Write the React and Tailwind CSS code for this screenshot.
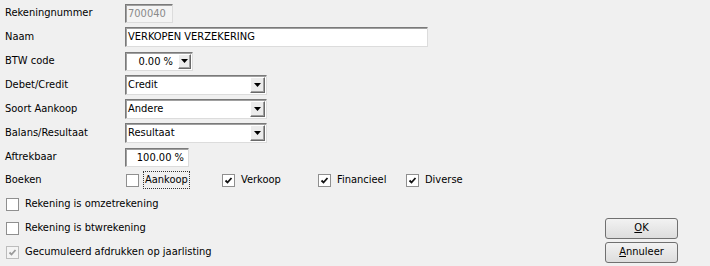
const sunken =
  "border border-t-[#7a7a7a] border-l-[#7a7a7a] border-r-[#dcdcdc] border-b-[#dcdcdc] shadow-[inset_1px_1px_0_#a0a0a0]";

function Arrow() {
  return (
    <svg width="7" height="4" viewBox="0 0 7 4">
      <path d="M0 0h7L3.5 4z" fill="#000" />
    </svg>
  );
}

function DropButton({ w = "w-[14px]" }) {
  return (
    <div
      className={`${w} my-[1px] mr-[1px] flex items-center justify-center border border-t-white border-l-white border-r-[#696969] border-b-[#696969] bg-[#ececec] shadow-[inset_-1px_-1px_0_#a0a0a0]`}
    >
      <Arrow />
    </div>
  );
}

function Row({ label, children, h = "h-[24px]" }) {
  return (
    <div className={`flex ${h} items-center`}>
      <span className="w-[125px] shrink-0 pl-[5px]">{label}</span>
      {children}
    </div>
  );
}

function Select({ value, w }) {
  return (
    <div className={`flex h-[20px] ${w} bg-white ${sunken}`}>
      <span className="flex-1 pl-[2px] leading-[18px]">{value}</span>
      <DropButton w="w-[15px]" />
    </div>
  );
}

function Check({ checked, disabled }) {
  return (
    <span
      className={`flex h-[13px] w-[13px] shrink-0 items-center justify-center border ${
        disabled ? "border-[#bcbcbc] bg-[#f4f4f4]" : "border-[#8f8f8f] bg-white"
      }`}
    >
      {checked && (
        <svg width="9" height="9" viewBox="0 0 9 9">
          <path
            d="M1.5 4.5 3.5 6.5 7.5 2"
            fill="none"
            stroke={disabled ? "#9a9a9a" : "#111"}
            strokeWidth="1.8"
          />
        </svg>
      )}
    </span>
  );
}

function CheckItem({ label, checked, disabled, focus, w }) {
  return (
    <div className={`flex items-center ${w}`}>
      <Check checked={checked} disabled={disabled} />
      <span
        className={`ml-[4px] px-[1px] ${
          focus ? "border border-dotted border-[#333]" : "border border-transparent"
        }`}
      >
        {label}
      </span>
    </div>
  );
}

function Button({ children }) {
  return (
    <button
      type="button"
      className="h-[21px] w-[73px] rounded-[3px] border border-[#707070] bg-gradient-to-b from-[#f2f2f2] to-[#dddddd] text-[11px] text-black"
    >
      {children}
    </button>
  );
}

export default function App() {
  return (
    <div
      className="relative h-[266px] w-[710px] overflow-hidden bg-[#f0f0f0] text-[11px] text-black"
      style={{ fontFamily: "'DejaVu Sans Condensed', 'Liberation Sans', sans-serif" }}
    >
      <div className="pt-[1px]">
        <Row label="Rekeningnummer">
          <div className={`h-[19px] w-[48px] bg-[#f4f4f4] ${sunken} pl-[2px] leading-[17px] text-[#8a8a8a]`}>
            700040
          </div>
        </Row>

        <Row label="Naam">
          <div className={`h-[20px] w-[303px] bg-white ${sunken} pl-[2px] leading-[18px]`}>
            VERKOPEN VERZEKERING
          </div>
        </Row>

        <Row label="BTW code">
          <div className={`flex h-[19px] w-[68px] bg-white ${sunken}`}>
            <span className="flex-1 pr-[5px] text-right leading-[17px]">0.00 %</span>
            <DropButton w="w-[13px]" />
          </div>
        </Row>

        <Row label="Debet/Credit">
          <Select value="Credit" w="w-[142px]" />
        </Row>

        <Row label="Soort Aankoop">
          <Select value="Andere" w="w-[142px]" />
        </Row>

        <Row label="Balans/Resultaat">
          <Select value="Resultaat" w="w-[142px]" />
        </Row>

        <Row label="Aftrekbaar">
          <div className={`h-[19px] w-[64px] bg-white ${sunken} pr-[4px] text-right leading-[17px]`}>
            100.00 %
          </div>
        </Row>

        <Row label="Boeken" h="h-[22px]">
          <div className="flex pl-[1px]">
            <CheckItem label="Aankoop" focus w="w-[96px]" />
            <CheckItem label="Verkoop" checked w="w-[96px]" />
            <CheckItem label="Financieel" checked w="w-[88px]" />
            <CheckItem label="Diverse" checked />
          </div>
        </Row>
      </div>

      <div className="mt-[1px] flex justify-between pr-[32px]">
        <div className="pl-[6px]">
          <div className="flex h-[24px] items-center">
            <CheckItem label="Rekening is omzetrekening" />
          </div>
          <div className="flex h-[24px] items-center">
            <CheckItem label="Rekening is btwrekening" />
          </div>
          <div className="flex h-[24px] items-center">
            <CheckItem label="Gecumuleerd afdrukken op jaarlisting" checked disabled />
          </div>
        </div>

        <div className="flex flex-col gap-[3px] pt-[26px]">
          <Button>
            <span className="underline">O</span>K
          </Button>
          <Button>
            <span className="underline">A</span>nnuleer
          </Button>
        </div>
      </div>
    </div>
  );
}
